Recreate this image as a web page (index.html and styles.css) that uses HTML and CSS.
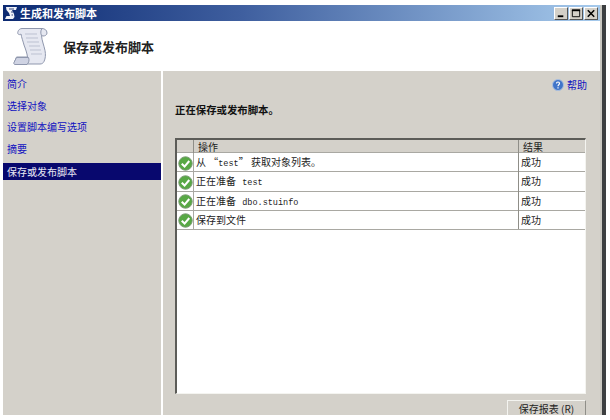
FILE: index.html
```html
<!DOCTYPE html>
<html lang="zh">
<head>
<meta charset="utf-8">
<title>生成和发布脚本</title>
<link rel="stylesheet" href="styles.css">
</head>
<body>
<div class="desktop">
  <div class="window">
    <div class="titlebar">
      <svg class="title-icon" viewBox="0 0 14 14" width="14" height="14"><path d="M2 1h11l-1 3H8l2 4 .5 3-1.500 2H1l1.500-3H6L5 7 2.500 4z" fill="#f0f2f8"/><path d="M5 3h5M7 6h2M7.500 9h1.500" stroke="#33457c" stroke-width="1"/></svg>
      <span class="title-text">生成和发布脚本</span>
      <div class="controls">
        <span class="ctl"><svg viewBox="0 0 13 12" width="13" height="12"><rect x="3" y="8" width="6" height="2" fill="#000"/></svg></span>
        <span class="ctl"><svg viewBox="0 0 13 12" width="13" height="12"><path d="M2.500 2.500h8v7h-8z" fill="none" stroke="#000"/><path d="M2 2.500h9" stroke="#000" stroke-width="2"/></svg></span>
        <span class="ctl"><svg viewBox="0 0 13 12" width="13" height="12"><path d="M3 2.500l7 7M10 2.500l-7 7" stroke="#000" stroke-width="1.700"/></svg></span>
      </div>
    </div>
    <div class="banner">
      <svg class="scroll" viewBox="0 0 36 38" width="36" height="38">
        <path d="M9 1.500h20c2.500 0 5 1.500 5 4.500 0 2-2 3-4 3l-1.500-.5c.3 5 2.500 10 3.500 15 .8 4 .5 8-1 11-.8 1.500-2 2.500-4 2.500H3c-1.500 0-2-1-1.500-2l2-5h11c-.5-4-2-8-3.500-12C10 14 8.500 10.500 8 7 6 8.500 4 7 5 4.500 5.500 2.800 7 1.500 9 1.500z" fill="#e6e8f1" stroke="#8f97ad"/>
        <path d="M3.500 30.500h12c1 2.500.5 5-1.500 7H2c-1 0-1.500-.8-1-2z" fill="#cfd3e3" stroke="#8f97ad"/>
        <path d="M28.500 8.500c-1-2-1-5 .5-7" fill="none" stroke="#8f97ad"/>
        <path d="M12 7h12M13 11h12M14 15h12M16 19h11M17 23h11M18 27h11" stroke="#bcc1d1"/>
      </svg>
      <h1 class="banner-title">保存或发布脚本</h1>
    </div>
    <div class="content">
      <nav class="sidebar">
        <a class="nav-item">简介</a>
        <a class="nav-item">选择对象</a>
        <a class="nav-item">设置脚本编写选项</a>
        <a class="nav-item">摘要</a>
        <a class="nav-item active">保存或发布脚本</a>
      </nav>
      <main class="panel">
        <div class="help">
          <svg viewBox="0 0 12 12" width="12" height="12"><circle cx="6" cy="6" r="5.500" fill="#3f74c9" stroke="#a9bfe0"/><path d="M4.500 4.500c0-2 3-2 3 0 0 1.300-1.500 1.200-1.500 2.700M6 8.300v1.200" stroke="#fff" stroke-width="1.200" fill="none"/></svg>
          <span>帮助</span>
        </div>
        <h2 class="status">正在保存或发布脚本。</h2>
        <div class="grid">
          <div class="row head">
            <span class="c-icon"></span>
            <span class="c-op">操作</span>
            <span class="c-res">结果</span>
          </div>
          <div class="row">
            <span class="c-icon"><svg class="ok" viewBox="0 0 16 16" width="15" height="15"><circle cx="8" cy="8" r="7.200" fill="#58a845" stroke="#7d9b76"/><path d="M4 8.300l3 3 5-6" stroke="#fff" stroke-width="2.200" fill="none"/></svg></span>
            <span class="c-op">从 “<span class="mono">test</span>” 获取对象列表。</span>
            <span class="c-res">成功</span>
          </div>
          <div class="row">
            <span class="c-icon"><svg class="ok" viewBox="0 0 16 16" width="15" height="15"><circle cx="8" cy="8" r="7.200" fill="#58a845" stroke="#7d9b76"/><path d="M4 8.300l3 3 5-6" stroke="#fff" stroke-width="2.200" fill="none"/></svg></span>
            <span class="c-op">正在准备 <span class="mono gap">test</span></span>
            <span class="c-res">成功</span>
          </div>
          <div class="row">
            <span class="c-icon"><svg class="ok" viewBox="0 0 16 16" width="15" height="15"><circle cx="8" cy="8" r="7.200" fill="#58a845" stroke="#7d9b76"/><path d="M4 8.300l3 3 5-6" stroke="#fff" stroke-width="2.200" fill="none"/></svg></span>
            <span class="c-op">正在准备 <span class="mono gap">dbo.stuinfo</span></span>
            <span class="c-res">成功</span>
          </div>
          <div class="row">
            <span class="c-icon"><svg class="ok" viewBox="0 0 16 16" width="15" height="15"><circle cx="8" cy="8" r="7.200" fill="#58a845" stroke="#7d9b76"/><path d="M4 8.300l3 3 5-6" stroke="#fff" stroke-width="2.200" fill="none"/></svg></span>
            <span class="c-op">保存到文件</span>
            <span class="c-res">成功</span>
          </div>
        </div>
        <div class="actions"><button class="btn">保存报表 (R)</button></div>
      </main>
    </div>
  </div>
  <div class="edge"></div>
</div>
</body>
</html>
```
FILE: styles.css
```css
* { box-sizing: border-box; }
html, body { margin: 0; height: 100%; background: #fff; overflow: hidden; }
body { font-family: "Noto Sans CJK SC", "Liberation Sans", sans-serif; font-size: 10px; color: #1c1c1c; }
.desktop { display: flex; width: 610px; height: 420px; padding: 5px 3px 5px 3px; }
.window { width: 597px; display: flex; flex-direction: column; }
.edge { width: 6px; background: linear-gradient(to right, #c9c7c0 0 2px, #3c3e40 2px); }
.titlebar { height: 16px; display: flex; align-items: center; padding: 0 2px 0 1px; background: linear-gradient(to right, #0c2a72, #3f5f9f 40%, #a6caec); color: #fff; }
.title-icon { margin-right: 2px; }
.title-text { font-size: 11px; font-weight: 700; line-height: 16px; }
.controls { margin-left: auto; display: flex; gap: 1px; }
.ctl { width: 14px; height: 13px; background: #d4d0c8; border: 1px solid; border-color: #fff #555 #555 #fff; display: flex; align-items: center; justify-content: center; }
.ctl svg { width: 12px; height: 11px; flex: none; }
.banner { height: 50px; background: #fff; display: flex; align-items: center; padding-left: 10px; }
.scroll { display: block; }
.banner-title { margin: 0 0 0 14px; font-size: 13px; font-weight: 700; color: #222; }
.content { flex: 1; display: flex; background: #fff; min-height: 0; }
.sidebar { width: 158px; background: #d4d1ca; display: flex; flex-direction: column; padding-top: 6px; }
.nav-item { height: 21.500px; line-height: 13px; padding: 0 4px; color: #1010c0; }
.nav-item.active { height: 17px; line-height: 17px; background: #08086e; color: #e8e8f4; }
.panel { flex: 1; margin-left: 2px; background: #d4d1ca; display: flex; flex-direction: column; padding: 7px 14px 0 12px; min-height: 0; }
.help { display: flex; justify-content: flex-end; align-items: center; gap: 3px; height: 13px; color: #1010c0; margin-right: -1px; }
.status { margin: 12px 0 0; font-size: 10.400px; line-height: 14px; font-weight: 700; color: #111; }
.grid { margin-top: 21px; height: 256px; background: #fff; border: 1px solid; border-color: #5c5c58 #f4f4f0 #f4f4f0 #5c5c58; border-top-width: 2px; border-left-width: 2px; }
.row { display: grid; grid-template-columns: 17px 325px 1fr; height: 19.300px; line-height: 18px; border-bottom: 1px solid #a9a8a2; }
.row.head { height: 13px; line-height: 13px; background: #d4d1ca; }
.row > span { height: 100%; white-space: pre; }
.row > .c-icon { display: flex; align-items: center; justify-content: center; border-right: 1px solid #a9a8a2; }
.c-op { padding-left: 2px; border-right: 1px solid #8f8e88; }
.head .c-op { padding-left: 4px; }
.head .c-icon { border-right: 1px solid #8f8e88; }
.c-res { padding-left: 2px; }
.head .c-res { padding-left: 4px; }
.mono { font-family: "Liberation Mono", "DejaVu Sans Mono", monospace; font-size: 8.500px; }
.gap { margin-left: 4px; }
.ok { display: block; }
.actions { display: flex; justify-content: flex-end; margin-top: 6px; }
.btn { width: 79px; height: 15px; padding: 0; font: inherit; line-height: 15px; color: #222; background: #d4d1ca; border: 1px solid; border-bottom: 0; border-color: #f4f4f0 #8f8e88 #8f8e88 #f4f4f0; }
```
